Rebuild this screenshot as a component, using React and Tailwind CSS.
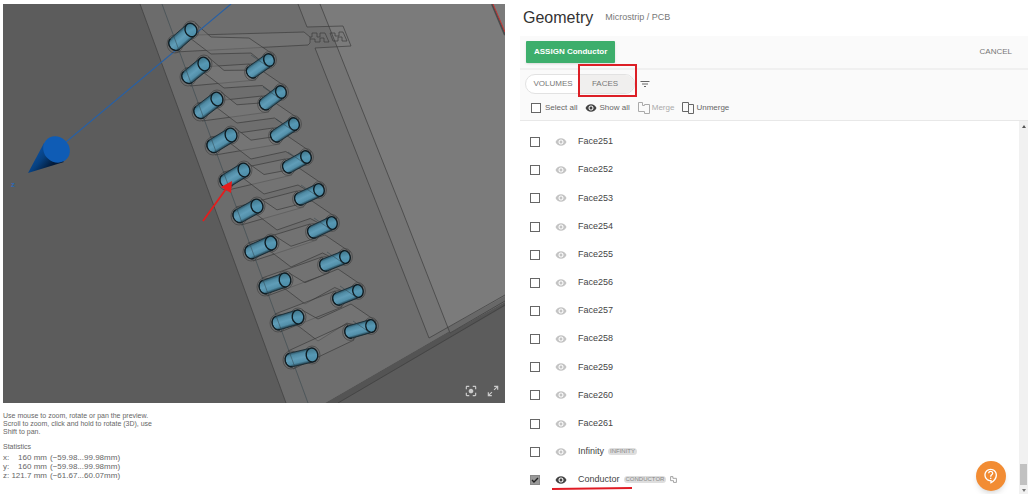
import { MdCenterFocusStrong, MdFilterList, MdOutlineContactSupport, MdRemoveRedEye } from 'react-icons/md';

// Via barrels: [bottom x, bottom y, opening x, opening y]
const LEFT_VIAS = [
  [175, 44, 191, 30],
  [188, 77, 204, 64],
  [200, 112, 217, 99],
  [213, 146, 231, 135],
  [226, 181, 244, 170],
  [239, 216, 257, 206],
  [251, 252, 271, 243],
  [265, 287, 285, 280],
  [278, 323, 298, 317],
  [291, 360, 312, 355],
];

const RIGHT_VIAS = [
  [252, 72, 269, 60],
  [265, 104, 281, 92],
  [276, 136, 294, 124],
  [288, 167, 306, 157],
  [300, 199, 319, 190],
  [313, 232, 332, 223],
  [325, 265, 345, 257],
  [338, 299, 358, 291],
  [350, 332, 371, 326],
];

const FACES = ['Face251', 'Face252', 'Face253', 'Face254', 'Face255', 'Face256', 'Face257', 'Face258', 'Face259', 'Face260', 'Face261'];

const ROWS = [
  ...FACES.map((name) => ({ name })),
  { name: 'Infinity', tag: 'INFINITY' },
  { name: 'Conductor', tag: 'CONDUCTOR', checked: true, merged: true },
];

const STATS = [
  { axis: 'x', size: '160', from: '−59.98', to: '99.98' },
  { axis: 'y', size: '160', from: '−59.98', to: '99.98' },
  { axis: 'z', size: '121.7', from: '−61.67', to: '60.07' },
];

function Via({ via, radius }) {
  const [x1, y1, x2, y2] = via;
  const length = Math.hypot(x2 - x1, y2 - y1);
  const angle = (Math.atan2(y2 - y1, x2 - x1) * 180) / Math.PI;
  const rx = radius - 1.2;

  return (
    <>
      <g fill="none" stroke="#444" strokeWidth="0.7">
        <ellipse cx={x1} cy={y1} rx={radius + 1} ry={radius + 2} />
        <ellipse cx={x2} cy={y2} rx={radius + 1} ry={radius + 2} />
      </g>
      <g transform={`translate(${x1} ${y1}) rotate(${angle})`}>
        <path
          d={`M0 ${-radius} H${length} V${radius} H0 A${rx} ${radius} 0 0 1 0 ${-radius}Z`}
          fill="url(#barrel)"
          stroke="#182a32"
          strokeWidth="0.8"
        />
        <path d={`M0 ${-radius} A${rx} ${radius} 0 0 0 0 ${radius}`} fill="none" stroke="#0f1c22" strokeWidth="1.2" />
      </g>
      <ellipse
        cx={x2}
        cy={y2}
        rx={rx}
        ry={radius}
        transform={`rotate(${angle * 0.6} ${x2} ${y2})`}
        fill="url(#opening)"
        stroke="#0f1c22"
        strokeWidth="1.4"
      />
    </>
  );
}

function Traces() {
  return (
    <g fill="none" stroke="#3a3a3a" strokeOpacity="0.85" strokeWidth="0.8">
      {RIGHT_VIAS.map((right, i) => {
        const [, , lx, ly] = LEFT_VIAS[i];
        const [nx, ny] = LEFT_VIAS[i + 1];
        const [bx, by, rx, ry] = right;
        const k = i / 8;
        return (
          <g key={i}>
            <path
              d={`M${lx + 4} ${ly - 7} L${lx + 20} ${ly + 7 - 5 * k} L${rx - 20} ${ry - 22} L${rx + 5} ${ry - 5} L${rx - 2} ${ry + 6} L${rx - 18 - 6 * k} ${ry - 7 + 4 * k} L${lx + 20} ${ly + 24} L${lx - 1} ${ly + 8}`}
              fill="#787878"
              fillOpacity="0.5"
            />
            <path d={`M${nx - 3} ${ny - 9} L${bx - 3} ${by - 8} L${bx + 4} ${by + 8} L${nx + 2} ${ny + 9}`} fill="#7a7a7a" fillOpacity="0.35" />
          </g>
        );
      })}
    </g>
  );
}

function BoardPreview() {
  return (
    <svg viewBox="3 4 502 399" className="block w-full" role="img" aria-label="3D preview of the board">
      <defs>
        <linearGradient id="barrel" x1="0" y1="0" x2="0" y2="1">
          <stop offset="0" stopColor="#2c5364" />
          <stop offset="0.2" stopColor="#4f8aa3" />
          <stop offset="0.5" stopColor="#609db8" />
          <stop offset="0.8" stopColor="#528fa9" />
          <stop offset="1" stopColor="#1f3c49" />
        </linearGradient>
        <linearGradient id="opening" x1="0" y1="0" x2="0" y2="1">
          <stop offset="0" stopColor="#3e7488" />
          <stop offset="0.5" stopColor="#5698b4" />
          <stop offset="1" stopColor="#4b8ba6" />
        </linearGradient>
        <linearGradient id="cone" x1="32" y1="156" x2="48" y2="170" gradientUnits="userSpaceOnUse">
          <stop offset="0" stopColor="#0a4f9f" />
          <stop offset="0.45" stopColor="#07407f" />
          <stop offset="1" stopColor="#031a38" />
        </linearGradient>
      </defs>

      <rect x="3" y="4" width="502" height="399" fill="#5c5c5c" />

      {/* board */}
      <path d="M325 403 L505 299 V306 L338 403Z" fill="#545454" />
      <path d="M140 4 L286 403 H325 L505 299 V4Z" fill="#6c6c6c" />
      <path d="M162 4 L308 403 H325 L505 299 V4Z" fill="#6e6e6e" />
      <path d="M298 4 L307 27 L343 26 L351 46 L315 48 L379 210 L429 338 L505 295 V4Z" fill="#757575" />
      <path d="M320 4 L402 210 L450 333 L505 302 V4Z" fill="#7b7b7b" />
      <path d="M450 333 L505 302 V296 L447 328Z" fill="#686868" />
      <g fill="none" stroke="#3f3f3f" strokeOpacity="0.8" strokeWidth="0.9">
        <path d="M140 4 L286 403" />
        <path d="M338 403 L505 305" />
        <path d="M298 4 L307 27 L343 26 L351 46 L315 48 L379 210 L429 338 L505 295" />
        <path d="M320 4 L402 210 L450 333 L505 301" />
        <path d="M197 35 L304 32 L310 37 V43 L308 45 L175 52" fill="#777" fillOpacity="0.5" />
        <path d="M310 37 H312 V33 H317 V37 H320 V33 H325 L329 42 H324 V38 H320 V42 H315 V39 H310" />
        <path d="M330 33 H335 V36 H339 V32 H343 L347 41 H342 V37 H338 V41 H333Z" />
      </g>
      <path d="M492 4 L505 35" stroke="#4b4b4b" strokeWidth="2" />
      <path d="M493 4 L505 32" stroke="#c73535" strokeWidth="1" />

      <Traces />
      <path d="M231 4 L66 142" stroke="#2860a4" strokeWidth="1.1" />
      {LEFT_VIAS.map((via) => (
        <Via key={via.join()} via={via} radius={7} />
      ))}
      {RIGHT_VIAS.map((via) => (
        <Via key={via.join()} via={via} radius={6.4} />
      ))}

      {/* lines that stay visible through the barrels */}
      <g fill="none" stroke="#2c3f47" strokeOpacity="0.6" strokeWidth="0.8">
        <path d="M162 4 L308 403" />
        {RIGHT_VIAS.map(([, , x, y]) => (
          <path key={x} d={`M${x - 18} ${y - 5} L${x - 2} ${y + 6}`} />
        ))}
      </g>

      {/* z axis */}
      <path d="M28 173 L44 143 L64 162Z" fill="url(#cone)" />
      <ellipse cx="56.5" cy="149.5" rx="14" ry="12.5" transform="rotate(42 56.5 149.5)" fill="#0f5cb5" />
      <text x="11" y="187" fontSize="8" fontWeight="bold" fill="#2f68b0" fontFamily="Liberation Sans, sans-serif">
        z
      </text>

      {/* pointer to the selected via */}
      <path d="M203 221 L226 189" stroke="#e51c1c" strokeWidth="1.8" />
      <path d="M232 181 L231 193 L221 187Z" fill="#e51c1c" />
    </svg>
  );
}

function MergeIcon({ split = false }) {
  return (
    <svg viewBox="0 0 12 12" className="size-3 shrink-0" fill="none" stroke="currentColor" aria-hidden="true">
      {split ? (
        <>
          <path d="M6.5 9.5h-6v-9h6v2" />
          <path d="M6.5 2.5h5v9h-5z" />
        </>
      ) : (
        <path d="M.5.5h4v3h2v-1h5v9h-5v-2h-6z" />
      )}
    </svg>
  );
}

function CheckBox({ label, checked = false }) {
  return (
    <span className="relative grid size-[10px] shrink-0 place-items-center">
      <input
        type="checkbox"
        aria-label={label}
        defaultChecked={checked}
        className="peer size-[10px] appearance-none border border-[#666] bg-white checked:border-[#888] checked:bg-[#999]"
      />
      <svg viewBox="0 0 10 10" className="pointer-events-none absolute inset-0 hidden peer-checked:block" fill="none" stroke="#222" strokeWidth="1.4" aria-hidden="true">
        <path d="M2 5l2 2 4-4" />
      </svg>
    </span>
  );
}

function PreviewPanel() {
  return (
    <section className="pt-1 text-[7px] leading-2 text-[#666]">
      <div className="relative">
        <BoardPreview />
        <div className="absolute right-[5px] bottom-[5px] flex items-center gap-2 text-[#ccc]">
          <button type="button" aria-label="Center view">
            <MdCenterFocusStrong className="size-3.5" />
          </button>
          <button type="button" aria-label="Expand preview">
            <svg viewBox="0 0 24 24" className="size-3.5" fill="currentColor" aria-hidden="true">
              <path d="M10 21v-2H6.4l4.5-4.5-1.4-1.4L5 17.6V14H3v7h7M14.5 10.9 19 6.4V10h2V3h-7v2h3.6l-4.5 4.5 1.4 1.4z" />
            </svg>
          </button>
        </div>
      </div>
      <p className="mt-[9px] w-[154px]">
        Use mouse to zoom, rotate or pan the preview. Scroll to zoom, click and hold to rotate (3D), use Shift to pan.
      </p>
      <h2 className="mt-[7px]">Statistics</h2>
      <table className="mt-0.5 text-[8px] leading-[9px]">
        <tbody>
          {STATS.map(({ axis, size, from, to }) => (
            <tr key={axis}>
              <th className="w-2 p-0 text-left font-normal">{axis}:</th>
              <td className="w-9 p-0 text-right">{size} mm</td>
              <td className="p-0 pl-[3px]">
                ({from}...{to}mm)
              </td>
            </tr>
          ))}
        </tbody>
      </table>
    </section>
  );
}

function Toolbar() {
  return (
    <div className="border-b border-[#e8e8e8] bg-[#fafafa] px-[5px] pt-1 pb-1.5 text-[8px] text-[#666]">
      <div className="flex items-center">
        <div className="flex h-5 rounded-full border border-[#e2e2e2] bg-white text-[#777]">
          <button type="button" className="w-[54px] rounded-l-full">
            VOLUMES
          </button>
          <div className="relative w-[54px]">
            <button type="button" className="h-full w-full rounded-r-full bg-[#f0efee] pr-1">
              FACES
            </button>
            <span className="pointer-events-none absolute -top-[11px] -right-[3px] -bottom-1 -left-0.5 border-2 border-[#dc1f26]" />
          </div>
        </div>
        <button type="button" aria-label="Filter" className="ml-1">
          <MdFilterList className="size-3" />
        </button>
      </div>
      <div className="mt-2 flex h-3 items-center gap-2 pl-1.5">
        <label className="flex items-center gap-1">
          <CheckBox label="Select all" />
          Select all
        </label>
        <button type="button" className="flex items-center gap-0.5">
          <MdRemoveRedEye className="size-3 text-[#444]" />
          Show all
        </button>
        <button type="button" className="flex items-center gap-0.5 text-[#aaa]">
          <MergeIcon />
          Merge
        </button>
        <button type="button" className="flex items-center gap-0.5">
          <MergeIcon split />
          Unmerge
        </button>
      </div>
    </div>
  );
}

function FaceRow({ row }) {
  return (
    <li className="flex min-h-7 grow items-center">
      <CheckBox label={row.name} checked={row.checked} />
      <button type="button" aria-label={`Toggle ${row.name}`} className={row.checked ? 'ml-[15px] text-[#444]' : 'ml-[15px] text-[#c4c4c4]'}>
        <MdRemoveRedEye className="size-3" />
      </button>
      <span className="relative ml-[11px] text-[9px] text-[#444]">
        {row.name}
        {row.checked && (
          <svg viewBox="0 0 80 3" className="absolute top-full -left-[26px] h-[3px] w-20 max-w-none" aria-hidden="true">
            <path d="M0 2 L80 1" stroke="#e01b24" strokeWidth="2" />
          </svg>
        )}
      </span>
      {row.tag && <span className="ml-1 rounded-full bg-[#dedede] px-0.5 text-[6px] leading-[7px] text-[#888]">{row.tag}</span>}
      {row.merged && (
        <svg viewBox="0 0 12 12" className="ml-1 size-[7px]" fill="none" stroke="#999" strokeWidth="1.5" aria-hidden="true">
          <path d="M1 1h4v3h6v7H6V8H1z" />
        </svg>
      )}
    </li>
  );
}

function Scrollbar() {
  return (
    <div className="flex w-[9px] shrink-0 flex-col items-center justify-between bg-[#f1f1f1] pt-1 pb-0.5" aria-hidden="true">
      <svg viewBox="0 0 4 3" className="h-[3px] w-1" fill="#555">
        <path d="M0 3 2 0 4 3z" />
      </svg>
      <div className="flex flex-col items-center gap-1">
        <span className="h-[21px] w-[7px] bg-[#c1c1c1]" />
        <svg viewBox="0 0 4 3" className="h-[3px] w-1" fill="#777">
          <path d="M0 0 2 3 4 0z" />
        </svg>
      </div>
    </div>
  );
}

export default function App() {
  return (
    <main className="grid min-h-screen grid-cols-[502fr_508fr] gap-[15px] bg-white pr-0.5 pl-[3px] font-['Liberation_Sans',Arial,sans-serif]">
      <PreviewPanel />

      <section className="flex flex-col">
        <header className="flex h-9 items-center gap-3 pl-[3px]">
          <h1 className="text-[16px] text-[#333]">Geometry</h1>
          <span className="text-[9px] text-[#777]">Microstrip / PCB</span>
        </header>
        <div className="flex h-[34px] items-center justify-between border-b-2 border-[#f0f0f0] bg-[#fafafa] pr-4 pl-1.5">
          <button type="button" className="h-[22px] rounded-[1px] bg-[#3dae6c] px-2 text-[8px] font-bold text-white shadow">
            ASSIGN Conductor
          </button>
          <button type="button" className="text-[8px] text-[#777]">
            CANCEL
          </button>
        </div>
        <Toolbar />
        <div className="relative flex grow">
          <ul className="flex grow flex-col pt-[7px] pl-[10px]">
            {ROWS.map((row) => (
              <FaceRow key={row.name} row={row} />
            ))}
          </ul>
          <Scrollbar />
          <button
            type="button"
            aria-label="Help"
            className="absolute right-[22px] bottom-[3px] grid size-[30px] place-items-center rounded-full bg-[#f28c33] text-white shadow-md"
          >
            <MdOutlineContactSupport className="size-4" />
          </button>
        </div>
      </section>
    </main>
  );
}
